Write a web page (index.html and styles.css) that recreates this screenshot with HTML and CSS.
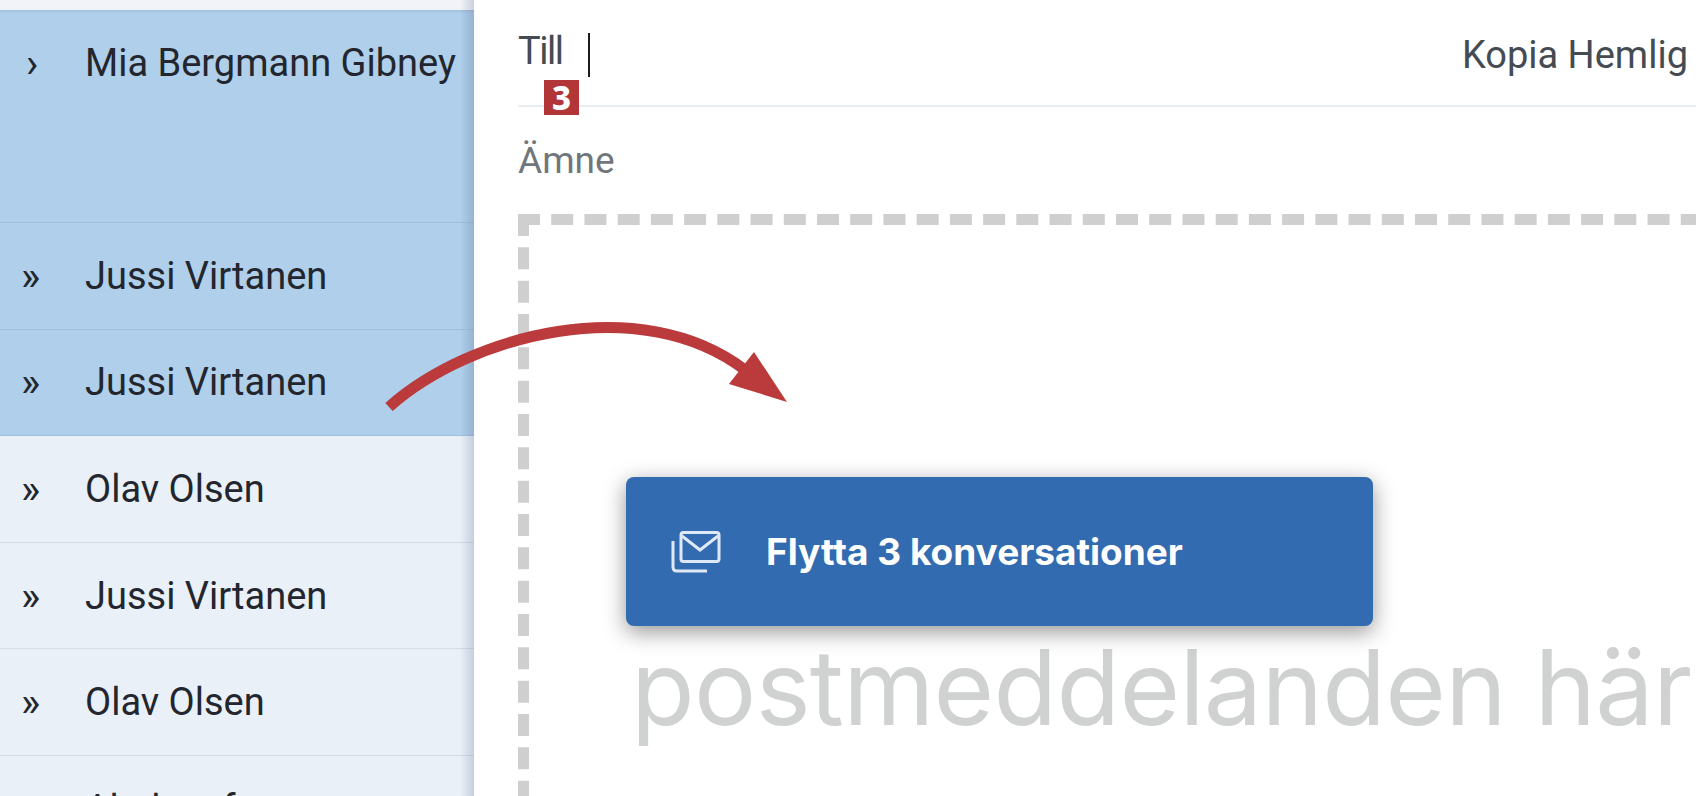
FILE: index.html
```html
<!DOCTYPE html>
<html lang="sv">
<head>
    <meta charset="UTF-8">
    <title>Flytta konversationer</title>
    <link rel="stylesheet" href="styles.css">
</head>
<body>
    <div class="app">
        <aside class="sidebar">
            <div class="top-strip"></div>
            <div class="row row-first selected"><span class="chev chev-single">›</span><span class="name">Mia Bergmann Gibney</span></div>
            <div class="row selected"><span class="chev">»</span><span class="name">Jussi Virtanen</span></div>
            <div class="row selected"><span class="chev">»</span><span class="name">Jussi Virtanen</span></div>
            <div class="row"><span class="chev">»</span><span class="name">Olav Olsen</span></div>
            <div class="row"><span class="chev">»</span><span class="name">Jussi Virtanen</span></div>
            <div class="row"><span class="chev">»</span><span class="name">Olav Olsen</span></div>
            <div class="row"><span class="chev">»</span><span class="name">Abelsgaf</span></div>
        </aside>
        <main class="compose">
            <div class="field-to">
                <span class="label">Till</span>
                <span class="caret"></span>
                <span class="cc">Kopia Hemlig</span>
            </div>
            <div class="field-subject">Ämne</div>
            <div class="dropzone">
                <p class="drop-text">postmeddelanden här</p>
            </div>
        </main>
    </div>

    <span class="badge">3</span>

    <div class="drag-chip">
        <svg class="chip-icon" viewBox="0 0 50 42" fill="none" stroke="#dfe9f5" stroke-width="3">
            <rect x="10" y="1.5" width="38" height="29" rx="2.5"/>
            <path d="M11 5 L29 19 L47 5"/>
            <path d="M2 10 V36 Q2 40 6 40 H36"/>
        </svg>
        <span>Flytta 3 konversationer</span>
    </div>

    <svg class="arrow" viewBox="0 0 1696 796">
        <path d="M389 407 C 470 335, 640 290, 745 370" fill="none" stroke="#bb3a3c" stroke-width="11"/>
        <path d="M787 402 L729 384 L743 366 L754 352 Z" fill="#bb3a3c"/>
    </svg>
</body>
</html>
```

FILE: styles.css
```css
html, body {
    margin: 0;
    padding: 0;
    height: 100%;
    overflow: hidden;
    background: #fff;
    font-family: Roboto, sans-serif;
}

.app {
    display: flex;
    height: 796px;
    overflow: hidden;
}

/* liste de gauche */
.sidebar {
    width: 474px;
    flex: none;
    background: #e9f0f8;
    position: relative;
    overflow: hidden;
}

/* ombre interne sur le bord droit */
.sidebar::after {
    content: "";
    position: absolute;
    top: 0;
    right: 0;
    bottom: 0;
    width: 14px;
    background: linear-gradient(to right, rgba(50, 70, 110, 0), rgba(50, 70, 110, 0.2));
}

.top-strip {
    height: 10px;
    background: #f1f3f8;
    box-shadow: 0 1px 3px rgba(60, 70, 90, 0.15);
    position: relative;
}

.row {
    display: flex;
    align-items: center;
    height: 106.6px;
    box-sizing: border-box;
    border-bottom: 1px solid #d3dde8;
    color: #23262e;
    font-size: 38px;
}

.row-first {
    height: 213px;
    align-items: flex-start;
    padding-top: 31px;
}

.selected {
    background: #afcfea;
    border-bottom-color: #9fc1e0;
}

.chev {
    width: 85px;
    padding-left: 21px;
    box-sizing: border-box;
    flex: none;
    font-size: 41px;
    line-height: 44px;
}

.chev-single {
    padding-left: 26px;
}

.name {
    white-space: nowrap;
}

/* fenetre de redaction */
.compose {
    flex: 1;
    padding-left: 44px;
    min-width: 0;
}

.field-to {
    display: flex;
    align-items: center;
    height: 107px;
    box-sizing: border-box;
    padding-top: 4px;
    border-bottom: 2px solid #e8edf2;
    font-size: 38px;
    color: #444b52;
}

.label {
    width: 70px;
    letter-spacing: -1.5px;
    margin-bottom: 7px;
}

.caret {
    width: 2px;
    height: 44px;
    background: #1c1c1c;
}

.cc {
    margin-left: auto;
    padding-right: 8px;
}

.field-subject {
    font-size: 37px;
    color: #70767b;
    padding-top: 32px;
    height: 75px;
}

.dropzone {
    border: 11px dashed #cfcfcf;
    border-right: none;
    height: 700px;
    margin-right: -40px;
}

.drop-text {
    margin: 0;
    padding: 402px 0 0 102px;
    font-family: Inter, sans-serif;
    font-size: 104px;
    letter-spacing: -0.7px;
    line-height: 120px;
    color: #d0d1d1;
    white-space: nowrap;
}

.badge {
    position: absolute;
    left: 544px;
    top: 80px;
    width: 35px;
    height: 35px;
    background: #b23537;
    color: #fff;
    font-family: "Noto Sans", sans-serif;
    font-weight: 800;
    font-size: 33px;
    line-height: 35px;
    text-align: center;
    z-index: 3;
}

.drag-chip {
    position: absolute;
    left: 626px;
    top: 477px;
    width: 747px;
    height: 149px;
    box-sizing: border-box;
    padding-left: 45px;
    display: flex;
    align-items: center;
    gap: 45px;
    background: #326bb0;
    border-radius: 8px;
    box-shadow: 0 6px 22px rgba(0, 0, 0, 0.42);
    color: #fff;
    font-family: Inter, sans-serif;
    font-weight: 700;
    font-size: 37px;
    z-index: 3;
}

.chip-icon {
    width: 50px;
    height: 42px;
    flex: none;
}

.arrow {
    position: absolute;
    left: 0;
    top: 0;
    width: 1696px;
    height: 796px;
    z-index: 4;
    pointer-events: none;
}
```
